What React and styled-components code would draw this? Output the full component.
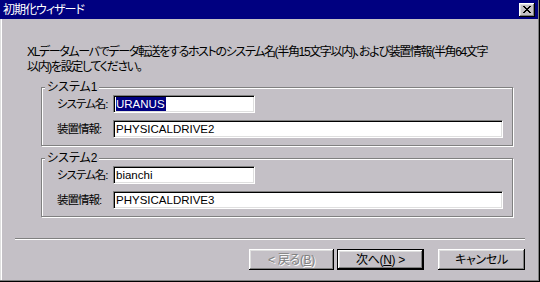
import React from 'react';
import styled, { createGlobalStyle } from 'styled-components';

const FACE = '#c4c0c6';
const FONT = '"Liberation Sans", "Noto Sans CJK JP", sans-serif';

const GlobalStyle = createGlobalStyle`
  html, body { margin: 0; padding: 0; background: ${FACE}; }
  body {
    font-family: ${FONT};
    font-size: 12px;
    font-feature-settings: "palt";
    color: #000;
  }
`;

const Window = styled.div`
  width: 540px;
  height: 282px;
  box-sizing: border-box;
  background: ${FACE};
  display: flex;
  flex-direction: column;
  border-right: 1px solid #000;
  border-bottom: 1px solid #000;
  box-shadow: inset -1px -1px 0 #808080, inset 1px 0 0 #dfdfdf, inset 2px 0 0 #fff;
`;

const TitleBar = styled.div`
  height: 19px;
  margin-right: 1px;
  background: #000080;
  color: #fff;
  display: flex;
  align-items: center;
  justify-content: space-between;
  padding: 0 3px 0 3px;
  flex-shrink: 0;
`;

const TitleText = styled.span`
  font-size: 12px;
  line-height: 14px;
  letter-spacing: -1px;
`;

const CloseButton = styled.div`
  width: 16px;
  height: 14px;
  box-sizing: border-box;
  background: ${FACE};
  display: flex;
  align-items: center;
  justify-content: center;
  box-shadow: inset -1px -1px 0 #000, inset 1px 1px 0 #fff, inset -2px -2px 0 #808080, inset 2px 2px 0 #dfdfdf;
`;

const Content = styled.div`
  flex: 1;
  display: flex;
  flex-direction: column;
  padding-top: 26px;
`;

const Intro = styled.p`
  margin: 0 0 0 27px;
  line-height: 15px;
  white-space: nowrap;
  letter-spacing: -1.35px;
`;

const Group = styled.div`
  position: relative;
  box-sizing: border-box;
  width: 472px;
  margin: ${(p) => p.$top}px 0 0 41px;
  border: 1px solid #808080;
  box-shadow: 1px 1px 0 #fff, inset 1px 1px 0 #fff;
  padding: 7px 0 7px 15px;
  display: grid;
  grid-template-columns: 56px auto;
  row-gap: 7px;
  align-items: center;
`;

const Legend = styled.span`
  position: absolute;
  top: -8px;
  left: 3px;
  padding: 0 2px;
  background: ${FACE};
  line-height: 14px;
  letter-spacing: 0;
`;

const Label = styled.span`
  font-size: 11.5px;
  line-height: 14px;
  letter-spacing: -1px;
  white-space: nowrap;
`;

const Field = styled.div`
  box-sizing: border-box;
  width: ${(p) => p.$w}px;
  height: 18px;
  background: #fff;
  border: 1px solid;
  border-color: #808080 #fff #fff #808080;
  box-shadow: inset 1px 1px 0 #000, inset -1px -1px 0 #dfdfdf;
  padding-left: 2px;
  display: flex;
  align-items: center;
  font-family: "Liberation Sans", sans-serif;
  font-size: 11.5px;
  white-space: nowrap;
`;

const Selected = styled.span`
  background: #000080;
  color: #fff;
  line-height: 14px;
  padding-right: 1px;
`;

const Separator = styled.div`
  margin: 21px 14px 0 15px;
  border-top: 1px solid #808080;
  border-bottom: 1px solid #fff;
`;

const ButtonRow = styled.div`
  display: flex;
  justify-content: flex-end;
  margin: 9px 14px 0 0;
`;

const Button = styled.div`
  box-sizing: border-box;
  width: ${(p) => p.$w}px;
  height: 21px;
  margin-left: ${(p) => p.$gap}px;
  background: ${FACE};
  display: flex;
  align-items: center;
  justify-content: center;
  line-height: 14px;
  white-space: nowrap;
  letter-spacing: -0.3px;
  color: ${(p) => (p.$disabled ? '#808080' : '#000')};
  text-shadow: ${(p) => (p.$disabled ? '1px 1px 0 #fff' : 'none')};
  border: ${(p) => (p.$default ? '1px solid #000' : 'none')};
  box-shadow: inset -1px -1px 0 #000, inset 1px 1px 0 #fff, inset -2px -2px 0 #808080, inset 2px 2px 0 #dfdfdf;
`;

const XIcon = () => (
  <svg width="8" height="7" viewBox="0 0 8 7" shapeRendering="crispEdges">
    <path d="M0 0h2v1h-2zM6 0h2v1h-2zM1 1h2v1h-2zM5 1h2v1h-2zM2 2h4v1h-4zM3 3h2v1h-2zM2 4h4v1h-4zM1 5h2v1h-2zM5 5h2v1h-2zM0 6h2v1h-2zM6 6h2v1h-2z" fill="#000" />
  </svg>
);

const SystemGroup = ({ title, name, device, selected, top }) => (
  <Group $top={top}>
    <Legend>{title}</Legend>
    <Label>システム名:</Label>
    <Field $w={142}>{selected ? <Selected>{name}</Selected> : name}</Field>
    <Label>装置情報:</Label>
    <Field $w={390}>{device}</Field>
  </Group>
);

export default function App() {
  return (
    <>
      <GlobalStyle />
      <Window>
        <TitleBar>
          <TitleText>初期化ウィザード</TitleText>
          <CloseButton>
            <XIcon />
          </CloseButton>
        </TitleBar>
        <Content>
          <Intro>
            XLデータムーバでデータ転送をするホストのシステム名(半角15文字以内)、および装置情報(半角64文字
            <br />
            以内)を設定してください。
          </Intro>
          <SystemGroup title="システム1" name="URANUS" device="PHYSICALDRIVE2" selected top={12} />
          <SystemGroup title="システム2" name="bianchi" device="PHYSICALDRIVE3" top={12} />
          <Separator />
          <ButtonRow>
            <Button $w={85} $gap={0} $disabled>
              &lt; 戻る(<u>B</u>)
            </Button>
            <Button $w={87} $gap={3} $default>
              次へ(<u>N</u>) &gt;
            </Button>
            <Button $w={87} $gap={14}>
              キャンセル
            </Button>
          </ButtonRow>
        </Content>
      </Window>
    </>
  );
}
